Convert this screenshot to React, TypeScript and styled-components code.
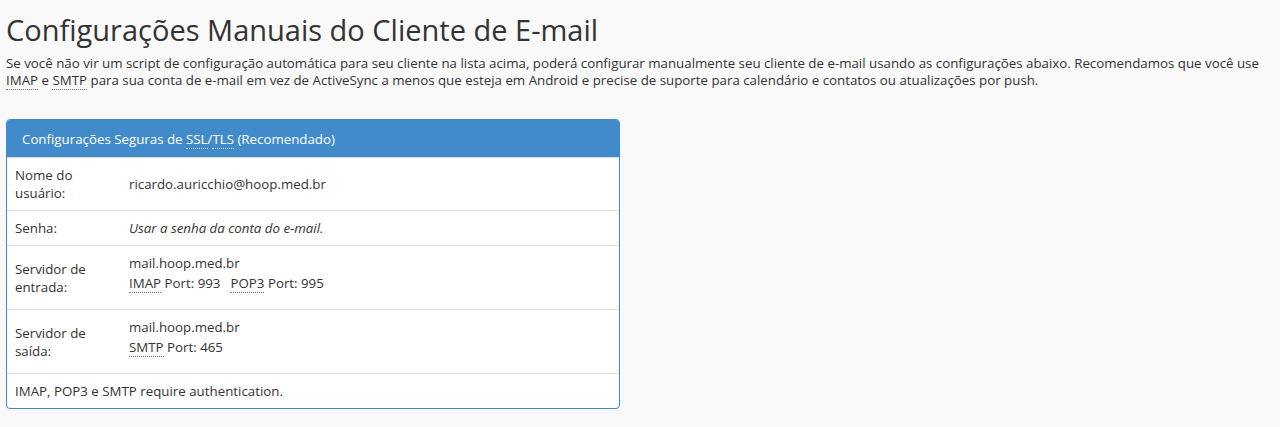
import React from "react";
import styled, { createGlobalStyle } from "styled-components";

const Global = createGlobalStyle`
  html, body { margin: 0; padding: 0; background: #f9f9f9; }
  body {
    font-family: "Open Sans", "Liberation Sans", sans-serif;
    font-size: 13.3px;
    color: #333;
  }
`;

const Page = styled.div`
  padding: 0 6px;
`;

const Title = styled.h1`
  margin: 12px 0 7px;
  font-size: 29px;
  font-weight: 400;
  line-height: 36px;
  color: #333;
`;

const Intro = styled.p`
  margin: 0 0 30px;
  line-height: 17px;
`;

const Abbr = styled.abbr`
  text-decoration: none;
  border-bottom: 1px dotted #777;
  cursor: help;
`;

const Panel = styled.div`
  width: 612px;
  border: 1px solid #428bca;
  border-radius: 4px;
  background: #fff;
  overflow: hidden;
`;

const PanelHeading = styled.div`
  background: #428bca;
  color: #fff;
  padding: 0 15px;
  height: 37px;
  display: flex;
  align-items: center;
  line-height: 18px;
`;

const HeadAbbr = styled(Abbr)`
  border-bottom-color: #cfe0f0;
`;

const Row = styled.div`
  display: grid;
  grid-template-columns: 114px 1fr;
  align-items: center;
  padding: 8px 8px;
  border-top: 1px solid #ddd;
  line-height: 18px;
  &:first-of-type { border-top: none; }
`;

const Label = styled.div`
  line-height: 18px;
`;

const Value = styled.div<{ $italic?: boolean }>`
  font-style: ${(p) => (p.$italic ? "italic" : "normal")};
`;

const ServerBlock = styled.div`
  align-self: start;
  padding-bottom: 9px;
`;

const PortLine = styled.div`
  margin-top: 2px;
  display: flex;
  gap: 10px;
`;

const Footer = styled.div`
  padding: 8px 8px;
  border-top: 1px solid #ddd;
  line-height: 18px;
`;

export default function App() {
  return (
    <Page>
      <Global />
      <Title>Configurações Manuais do Cliente de E-mail</Title>
      <Intro>
        Se você não vir um script de configuração automática para seu cliente na lista acima, poderá configurar
        manualmente seu cliente de e-mail usando as configurações abaixo. Recomendamos que você use{" "}
        <Abbr title="Internet Message Access Protocol">IMAP</Abbr> e{" "}
        <Abbr title="Simple Mail Transfer Protocol">SMTP</Abbr> para sua conta de e-mail em vez de ActiveSync a
        menos que esteja em Android e precise de suporte para calendário e contatos ou atualizações por push.
      </Intro>
      <Panel>
        <PanelHeading>
          <span>
            Configurações Seguras de <HeadAbbr title="Secure Sockets Layer">SSL</HeadAbbr>/
            <HeadAbbr title="Transport Layer Security">TLS</HeadAbbr> (Recomendado)
          </span>
        </PanelHeading>
        <Row>
          <Label>
            Nome do
            <br />
            usuário:
          </Label>
          <Value>ricardo.auricchio@hoop.med.br</Value>
        </Row>
        <Row>
          <Label>Senha:</Label>
          <Value $italic>Usar a senha da conta do e-mail.</Value>
        </Row>
        <Row>
          <Label>
            Servidor de
            <br />
            entrada:
          </Label>
          <ServerBlock>
            <div>mail.hoop.med.br</div>
            <PortLine>
              <span>
                <Abbr title="Internet Message Access Protocol">IMAP</Abbr> Port: 993
              </span>
              <span>
                <Abbr title="Post Office Protocol 3">POP3</Abbr> Port: 995
              </span>
            </PortLine>
          </ServerBlock>
        </Row>
        <Row>
          <Label>
            Servidor de
            <br />
            saída:
          </Label>
          <ServerBlock>
            <div>mail.hoop.med.br</div>
            <PortLine>
              <span>
                <Abbr title="Simple Mail Transfer Protocol">SMTP</Abbr> Port: 465
              </span>
            </PortLine>
          </ServerBlock>
        </Row>
        <Footer>IMAP, POP3 e SMTP require authentication.</Footer>
      </Panel>
    </Page>
  );
}
